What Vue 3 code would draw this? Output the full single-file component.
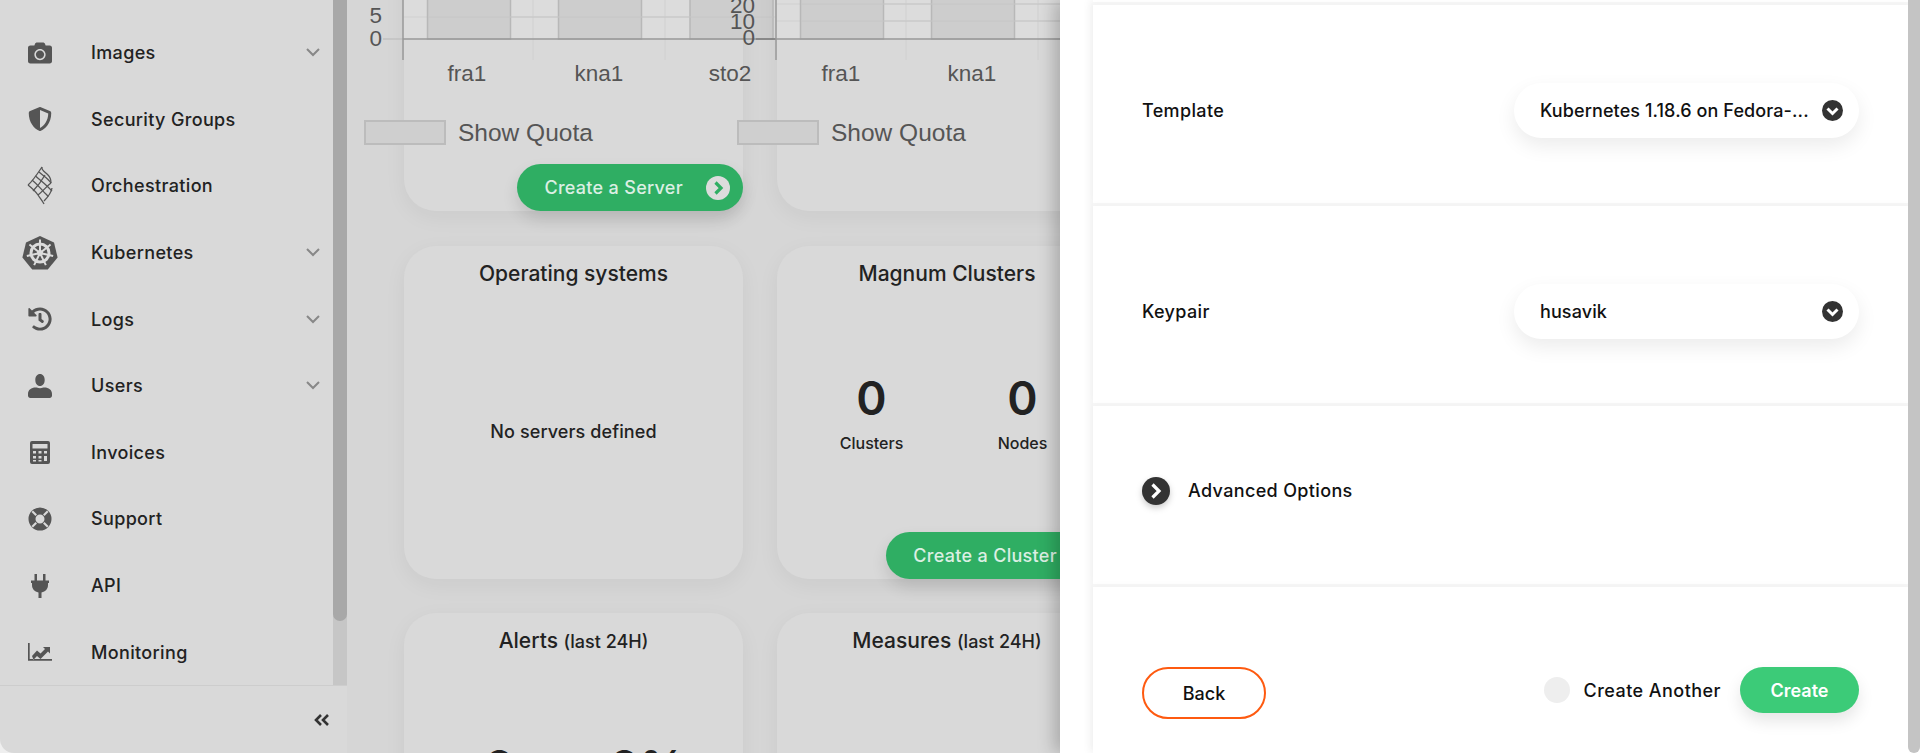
<template>
  <div class="page">
    <aside class="sidebar">
      <div class="sidebar-scroll">
        <ul class="nav">
          <li v-for="item in navItems" :key="item.label" class="nav-item">
            <span class="nav-icon">
              <svg v-if="item.label === 'Orchestration'" width="26" height="40" viewBox="0 0 26 40" fill="none" stroke="#555" stroke-width="1.3">
                <path d="M1 19C6 23 9 26 11 29C13 32 15 34 17 38" />
                <path d="M5 14C10 18 13 22 16 25C18 28 21 29 21 31" />
                <path d="M8.5 10C13 14 17 17 20 20C22 22 24 24 25 25" />
                <path d="M12 6C15 9 21 12 24 17" />
                <path d="M15 1C14 4 18 6 21 9C23 11 24 14 24 17" />
                <path d="M1 19C5 16 9 10 15 1" />
                <path d="M6 25C10 21 14 16 18 9" />
                <path d="M11 29C16 25 20 20 24 17" />
                <path d="M17 35C20 32 24 28 25 22" />
              </svg>
              <svg v-else-if="item.label === 'Kubernetes'" width="36" height="36" viewBox="0 0 36 36">
                <path d="M18 1l14 6.5 3.6 15-9.8 12H10.200L.4 22.500 4 7.500z" fill="#555" />
                <circle cx="18" cy="18" r="9" fill="none" stroke="#dcdcdc" stroke-width="3" />
                <path d="M18 18L18 4.500M18 18L28.560 9.590M18 18L31.160 21M18 18L23.860 30.160M18 18L12.140 30.160M18 18L4.840 21M18 18L7.440 9.590" stroke="#dcdcdc" stroke-width="2" />
                <circle cx="18" cy="18" r="3" fill="#dcdcdc" />
              </svg>
              <svg v-else :width="item.w" :height="item.h" :viewBox="item.box" fill="#555" fill-rule="evenodd">
                <path :d="item.d" />
              </svg>
            </span>
            <span class="nav-label">{{ item.label }}</span>
            <svg v-if="item.sub" class="nav-caret" width="14" height="9" viewBox="0 0 14 9" fill="none" stroke="#888" stroke-width="2">
              <polyline points="1 1 7 7 13 1" />
            </svg>
          </li>
        </ul>
        <div class="scrollbar"><div class="scrollbar-thumb"></div></div>
      </div>
      <div class="sidebar-foot">
        <svg width="16" height="12" viewBox="0 0 16 12" fill="none" stroke="#333" stroke-width="2.600">
          <polyline points="7 1 2 6 7 11" />
          <polyline points="14 1 9 6 14 11" />
        </svg>
      </div>
    </aside>

    <main class="main">
      <div class="grid">
        <div v-for="(chart, i) in charts" :key="i" class="card card-chart">
          <svg class="chart" width="430" height="90" viewBox="0 0 430 90">
            <rect x="56" y="0" width="373" height="39" fill="#dcdcdc" />
            <line v-for="y in chart.grid" :key="y" x1="56" x2="429" :y1="y" :y2="y" stroke="#d0d0d0" />
            <line v-for="x in [186, 318]" :key="x" :x1="x" :x2="x" y1="0" y2="60" stroke="#d0d0d0" />
            <rect v-for="x in [80.5, 211.5, 343]" :key="x" :x="x" y="-5" width="83" height="44" fill="#cdcdcd" stroke="#b8b8b8" stroke-width="1.500" />
            <line v-for="y in chart.grid" :key="'over' + y" x1="81" x2="426" :y1="y" :y2="y" stroke="#c6c6c6" />
            <line x1="36" x2="56" y1="39" y2="39" :stroke="chart.tickColor" stroke-width="1.200" />
            <line x1="56" x2="429" y1="39" y2="39" stroke="#999" stroke-width="1.500" />
            <line x1="56" x2="56" y1="0" y2="60" stroke="#999" stroke-width="1.500" />
            <text v-for="t in chart.ticks" :key="t.label" class="chart-text" x="35" :y="t.y" text-anchor="end">{{ t.label }}</text>
            <text v-for="l in chart.labels" :key="l.name" class="chart-text" :x="l.x" y="80.500" text-anchor="middle">{{ l.name }}</text>
          </svg>
          <label class="quota">
            <span class="quota-box"></span>
            <span>Show Quota</span>
          </label>
          <button class="cta" v-if="chart.cta">
            {{ chart.cta }}
            <svg width="24" height="24" viewBox="0 0 24 24">
              <circle cx="12" cy="12" r="12" fill="#dcdcdc" />
              <polyline points="9.500 6.500 15 12 9.500 17.500" fill="none" stroke="#2fae63" stroke-width="3.200" />
            </svg>
          </button>
        </div>

        <div class="card">
          <h3 class="card-title">Operating systems</h3>
          <div class="card-empty">No servers defined</div>
        </div>

        <div class="card">
          <h3 class="card-title">Magnum Clusters</h3>
          <div class="stats stats-magnum">
            <div class="stat">
              <div class="stat-value">0</div>
              <div class="stat-label">Clusters</div>
            </div>
            <div class="stat">
              <div class="stat-value">0</div>
              <div class="stat-label">Nodes</div>
            </div>
          </div>
          <button class="cta cta-bottom">
            Create a Cluster
            <svg width="24" height="24" viewBox="0 0 24 24">
              <circle cx="12" cy="12" r="12" fill="#dcdcdc" />
              <polyline points="9.500 6.500 15 12 9.500 17.500" fill="none" stroke="#2fae63" stroke-width="3.200" />
            </svg>
          </button>
        </div>

        <div class="card">
          <h3 class="card-title">Alerts <small>(last 24H)</small></h3>
          <div class="stats stats-alerts">
            <div class="stat"><div class="stat-value">0</div></div>
            <div class="stat"><div class="stat-value">0%</div></div>
          </div>
        </div>

        <div class="card">
          <h3 class="card-title">Measures <small>(last 24H)</small></h3>
        </div>
      </div>
    </main>

    <section class="drawer">
      <div class="panel">
        <div class="row row-stub"></div>
        <div class="row row-field">
          <span class="field-label">Template</span>
          <div class="select">
            <span class="select-text">Kubernetes 1.18.6 on Fedora-...</span>
            <svg width="21" height="21" viewBox="0 0 21 21">
              <circle cx="10.500" cy="10.500" r="10.500" fill="#333" />
              <polyline points="5.500 8.500 10.500 13.500 15.500 8.500" fill="none" stroke="#fff" stroke-width="3" />
            </svg>
          </div>
        </div>
        <div class="row row-field">
          <span class="field-label">Keypair</span>
          <div class="select">
            <span class="select-text">husavik</span>
            <svg width="21" height="21" viewBox="0 0 21 21">
              <circle cx="10.500" cy="10.500" r="10.500" fill="#333" />
              <polyline points="5.500 8.500 10.500 13.500 15.500 8.500" fill="none" stroke="#fff" stroke-width="3" />
            </svg>
          </div>
        </div>
        <div class="row row-advanced">
          <svg class="advanced-icon" width="28" height="28" viewBox="0 0 28 28">
            <circle cx="14" cy="14" r="14" fill="#333" />
            <polyline points="10.500 7.500 17 14 10.500 20.500" fill="none" stroke="#fff" stroke-width="3.200" />
          </svg>
          <span>Advanced Options</span>
        </div>
        <div class="row row-actions">
          <button class="btn-back">Back</button>
          <div class="actions-right">
            <span class="radio"></span>
            <span class="another">Create Another</span>
            <button class="btn-create">Create</button>
          </div>
        </div>
      </div>
      <div class="panel-scrollbar"></div>
    </section>
  </div>
</template>

<script setup>
const navItems = [
  {
    label: 'Images', sub: true, w: 24, h: 24, box: '0 0 512 512',
    d: 'M512 144v288c0 26.500-21.500 48-48 48H48c-26.500 0-48-21.500-48-48V144c0-26.500 21.500-48 48-48h88l12.300-32.900c7-18.700 24.900-31.100 44.900-31.100h125.500c20 0 38 12.400 45 31.100L376 96h88c26.500 0 48 21.500 48 48zM376 288c0-66.200-53.800-120-120-120s-120 53.800-120 120 53.800 120 120 120 120-53.800 120-120zm-32 0c0 48.500-39.500 88-88 88s-88-39.500-88-88 39.500-88 88-88 88 39.500 88 88z'
  },
  {
    label: 'Security Groups', w: 24, h: 24, box: '0 0 512 512',
    d: 'M466.500 83.700l-192-80a48.150 48.150 0 0 0-36.900 0l-192 80C27.700 91.100 16 108.600 16 128c0 198.500 114.500 335.700 221.500 380.300 11.800 4.900 25.100 4.900 36.900 0C360.100 472.600 496 349.300 496 128c0-19.400-11.700-36.900-29.500-44.300zM256.100 446.300l-.1-381 175.900 73.300c-3.300 151.400-82.100 261.100-175.800 307.700z'
  },
  { label: 'Orchestration' },
  { label: 'Kubernetes', sub: true },
  {
    label: 'Logs', sub: true, w: 24, h: 24, box: '0 0 512 512',
    d: 'M504 255.531c.253 136.640-111.180 248.372-247.820 248.468-59.015.042-113.223-20.530-155.822-54.911-11.077-8.940-11.905-25.541-1.839-35.607l11.267-11.267c8.609-8.609 22.353-9.551 31.891-1.984C173.062 425.135 212.781 440 256 440c101.705 0 184-82.311 184-184 0-101.705-82.311-184-184-184-48.814 0-93.149 18.969-126.068 49.932l50.754 50.754c10.080 10.080 2.941 27.314-11.313 27.314H24c-8.837 0-16-7.163-16-16V38.627c0-14.254 17.234-21.393 27.314-11.314l49.372 49.372C129.209 34.136 189.552 8 256 8c136.810 0 247.747 110.780 248 247.531zm-180.912 78.784l9.823-12.630c8.138-10.463 6.253-25.542-4.210-33.679L288 256.349V152c0-13.255-10.745-24-24-24h-16c-13.255 0-24 10.745-24 24v135.651l65.409 50.874c10.463 8.137 25.541 6.253 33.679-4.210z'
  },
  {
    label: 'Users', sub: true, w: 24, h: 24, box: '0 0 512 512',
    d: 'M256 256c60 0 100-50 100-128S316 0 256 0 156 50 156 128s40 128 100 128zm96 32h-26c-22 10-46 16-70 16s-48-6-70-16h-26C74 288 0 340 0 422v42c0 26 22 48 48 48h416c26 0 48-22 48-48v-42c0-82-74-134-160-134z'
  },
  {
    label: 'Invoices', w: 20, h: 23, box: '0 0 20 23',
    d: 'M2 0h16a2 2 0 0 1 2 2v19a2 2 0 0 1-2 2H2a2 2 0 0 1-2-2V2a2 2 0 0 1 2-2zM2.500 3v4.500h15V3zM3 10v2.500h3V10zM8.500 10v2.500h3V10zM14 10v2.500h3V10zM3 15v2.500h3V15zM8.500 15v2.500h3V15zM14 15v5h3v-5zM3 19v1.500h3V19zM8.500 19v1.500h3V19z'
  },
  {
    label: 'Support', w: 24, h: 24, box: '0 0 24 24',
    d: 'M12 .5a11.500 11.500 0 1 1 0 23 11.500 11.500 0 0 1 0-23zM12 7.500a4.500 4.500 0 1 0 0 9 4.500 4.500 0 0 0 0-9zM5 3.500L3.500 5l4 4c.3-.6.9-1.200 1.500-1.500zM19 3.500l-4 4c.6.3 1.200.9 1.500 1.500l4-4zM7.500 15l-4 4L5 20.500l4-4c-.6-.3-1.200-.9-1.500-1.500zM16.500 15c-.3.6-.9 1.200-1.500 1.500l4 4 1.500-1.500z'
  },
  {
    label: 'API', w: 18, h: 24, box: '0 0 18 24',
    d: 'M3.500 0h2.500v6.500H3.500zM12 0h2.500v6.500H12zM0 6.500h18v2.500h-1v2c0 4-2.500 6.500-6.500 7.500V24h-3v-5.500C3.500 17.500 1 15 1 11V9H0z'
  },
  {
    label: 'Monitoring', w: 24, h: 18, box: '0 0 24 18',
    d: 'M0 0h1.700v16H24v1.700H0zM4 13l5-5.500 3.500 3L17 6l-2-2h7v6.500l-2-2-7.500 7.500-3.500-3-3.500 3.800z'
  }
]

const charts = [
  {
    grid: [17],
    tickColor: '#bdbdbd',
    ticks: [{ label: '10', y: -2 }, { label: '5', y: 23 }, { label: '0', y: 46 }],
    labels: [{ name: 'fra1', x: 120 }, { name: 'kna1', x: 252 }, { name: 'sto2', x: 383 }],
    cta: 'Create a Server'
  },
  {
    grid: [4, 21],
    tickColor: '#777',
    ticks: [{ label: '20', y: 13 }, { label: '10', y: 29 }, { label: '0', y: 45 }],
    labels: [{ name: 'fra1', x: 121 }, { name: 'kna1', x: 252 }, { name: 'sto2', x: 383 }]
  }
]
</script>

<style>
html, body {
  margin: 0;
  background: #efefef;
}
</style>

<style scoped>
.page {
  display: flex;
  position: relative;
  height: 753px;
  overflow: hidden;
  font-family: Inter, "Liberation Sans", sans-serif;
  color: #222;
}

.sidebar {
  flex: none;
  display: flex;
  flex-direction: column;
  width: 347px;
  background: #d9d9d9;
  border-bottom-left-radius: 14px;
}

.sidebar-scroll {
  flex: 1;
  display: flex;
  min-height: 0;
}

.nav {
  flex: 1;
  margin: 0;
  padding: 19.5px 0 0;
  list-style: none;
}

.nav-item {
  display: flex;
  align-items: center;
  height: 66.6px;
  font-size: 18px;
  font-weight: 500;
  letter-spacing: 0.35px;
}

.nav-icon {
  display: flex;
  align-items: center;
  justify-content: center;
  flex: none;
  width: 80px;
  margin-right: 11px;
}

.nav-label {
  flex: 1;
}

.nav-caret {
  margin-right: 13px;
}

.scrollbar {
  flex: none;
  width: 14px;
  background: #c6c6c6;
}

.scrollbar-thumb {
  height: 621px;
  background: #a8a8a8;
  border-radius: 0 0 7px 7px;
}

.sidebar-foot {
  flex: none;
  display: flex;
  align-items: center;
  justify-content: flex-end;
  height: 67px;
  padding-right: 17px;
  border-top: 1px solid #cdcdcd;
}

.main {
  flex: 1;
  min-width: 0;
  padding-left: 57px;
  background: #d6d6d6;
}

.grid {
  display: grid;
  grid-template-columns: 339px 340px;
  grid-auto-rows: 333px;
  gap: 34.5px 34px;
  margin-top: -122px;
}

.card {
  display: flex;
  flex-direction: column;
  background: #d9d9d9;
  border-radius: 32px;
  box-shadow: 0 6px 22px rgba(0, 0, 0, 0.05);
}

.card-chart {
  justify-content: flex-end;
}

.chart {
  flex: none;
  margin-left: -57px;
  overflow: visible;
}

.chart-text {
  font-family: "Liberation Sans", Arial, sans-serif;
  font-size: 22.5px;
  fill: #555;
}

.quota {
  display: flex;
  align-items: center;
  gap: 12px;
  height: 25px;
  margin: 30px 0 66px -40px;
  font-family: "Liberation Sans", Arial, sans-serif;
  font-size: 24.5px;
  color: #555;
}

.quota-box {
  width: 78px;
  height: 21px;
  background: #cfcfcf;
  border: 2px solid #bcbcbc;
}

.card-chart .cta {
  margin-top: -47px;
}

.card-title {
  margin: 0;
  padding-top: 16px;
  font-size: 21px;
  line-height: 24px;
  font-weight: 500;
  text-align: center;
}

.card-title small {
  font-size: 18px;
}

.card-empty {
  flex: 1;
  display: flex;
  align-items: center;
  justify-content: center;
  padding-bottom: 1px;
  font-size: 18px;
  font-weight: 500;
  letter-spacing: 0.1px;
}

.stats {
  display: grid;
  justify-content: center;
  text-align: center;
}

.stats-magnum {
  grid-template-columns: 151px 151px;
  margin-top: 90px;
}

.stats-alerts {
  grid-template-columns: 148px 148px;
  margin-top: 91px;
}

.stat-value {
  font-size: 46px;
  line-height: 44px;
  font-weight: 600;
}

.stat-label {
  margin-top: 13px;
  font-size: 16px;
  line-height: 20px;
  font-weight: 500;
}

.cta {
  display: flex;
  align-items: center;
  gap: 23px;
  align-self: flex-end;
  flex: none;
  height: 47px;
  padding: 0 13px 0 27px;
  border: none;
  border-radius: 24px;
  background: #2fae63;
  color: #dcefe3;
  font-family: inherit;
  font-size: 18px;
  font-weight: 500;
  letter-spacing: 0.3px;
  white-space: nowrap;
  box-shadow: 0 8px 16px rgba(0, 0, 0, 0.12);
}

.cta-bottom {
  margin-top: auto;
}

/* the wizard panel sits over the dashboard */
.drawer {
  position: absolute;
  top: 0;
  right: 0;
  bottom: 0;
  left: 1060px;
  display: flex;
  padding-left: 33px;
  background: #fff;
  box-shadow: -6px 0 16px rgba(0, 0, 0, 0.22);
}

.panel {
  flex: 1;
  display: flex;
  flex-direction: column;
  gap: 3px;
  background: #f7f7f7;
  box-shadow: -3px 0 8px rgba(0, 0, 0, 0.06);
  font-size: 18px;
  font-weight: 500;
  letter-spacing: 0.35px;
  color: #111;
}

.row {
  flex: none;
  padding: 0 49px;
  background: #fff;
  box-shadow: 0 -3px 6px rgba(0, 0, 0, 0.02);
}

.row-stub {
  height: 2px;
}

.row-field {
  display: flex;
  justify-content: space-between;
  align-items: flex-start;
  height: 197.5px;
  padding-top: 78px;
  box-sizing: border-box;
}

.field-label {
  line-height: 55px;
}

.select {
  display: flex;
  align-items: center;
  justify-content: space-between;
  width: 345px;
  height: 55px;
  padding: 0 16px 0 26px;
  box-sizing: border-box;
  background: #fff;
  border-radius: 28px;
  box-shadow: 0 8px 20px rgba(0, 0, 0, 0.08);
}

.select-text {
  letter-spacing: 0.1px;
}

.row-advanced {
  display: flex;
  align-items: flex-start;
  gap: 18px;
  height: 178px;
  padding-top: 71px;
  box-sizing: border-box;
  line-height: 28px;
}

.advanced-icon {
  flex: none;
  filter: drop-shadow(0 3px 3px rgba(0, 0, 0, 0.2));
}

.row-actions {
  flex: 1;
  display: flex;
  justify-content: space-between;
  align-items: flex-start;
  padding-top: 80px;
}

.btn-back {
  width: 124px;
  height: 52px;
  background: #fff;
  border: 2px solid #fe5a10;
  border-radius: 26px;
  color: #111;
  font: inherit;
}

.actions-right {
  display: flex;
  align-items: center;
}

.radio {
  width: 26px;
  height: 26px;
  margin-right: 14px;
  background: #eee;
  border-radius: 50%;
}

.another {
  margin-right: 19px;
  letter-spacing: 0.45px;
}

.btn-create {
  width: 119px;
  height: 46px;
  background: #3ccb78;
  border: none;
  border-radius: 23px;
  color: #fff;
  font: inherit;
  font-weight: 600;
  box-shadow: 0 8px 16px rgba(0, 0, 0, 0.1);
}

.panel-scrollbar {
  flex: none;
  width: 12px;
  background: #c4c4c4;
  border-radius: 0 0 6px 6px;
}
</style>
